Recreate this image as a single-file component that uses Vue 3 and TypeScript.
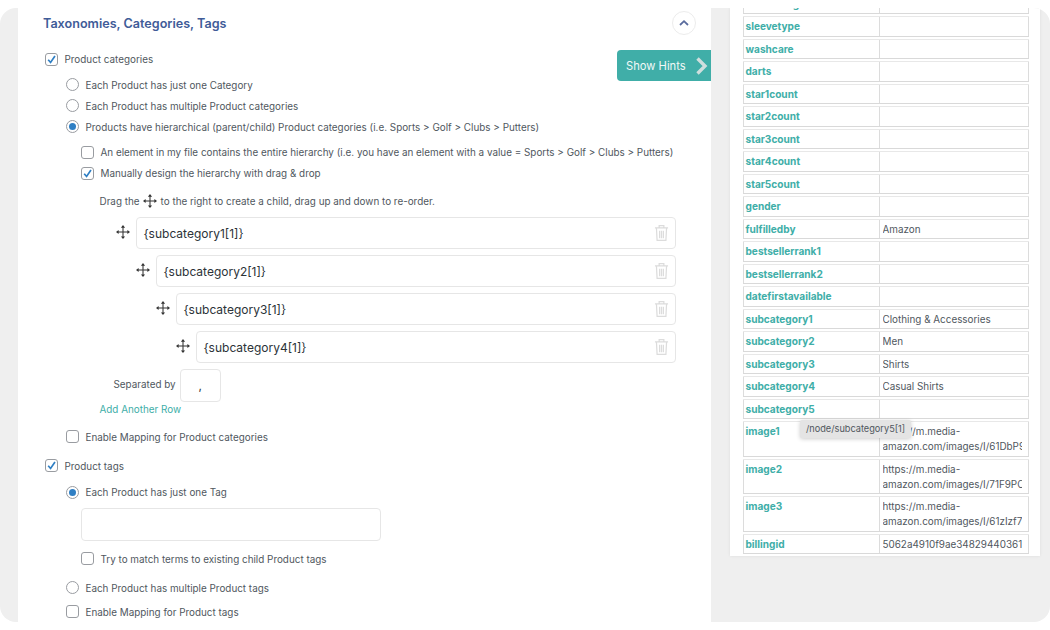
<script setup lang="ts">
interface Row { label: string; value: string; tall?: boolean }
const labels = ['sleevelength','sleevetype','washcare','darts','star1count','star2count','star3count','star4count','star5count','gender']
const rows: Row[] = [
  ...labels.map((label) => ({ label, value: '' })),
  { label: 'fulfilledby', value: 'Amazon' },
  { label: 'bestsellerrank1', value: '' },
  { label: 'bestsellerrank2', value: '' },
  { label: 'datefirstavailable', value: '' },
  { label: 'subcategory1', value: 'Clothing & Accessories' },
  { label: 'subcategory2', value: 'Men' },
  { label: 'subcategory3', value: 'Shirts' },
  { label: 'subcategory4', value: 'Casual Shirts' },
  { label: 'subcategory5', value: '' },
  { label: 'image1', value: 'https://m.media-amazon.com/images/I/61DbP9xkQ2L._AC_UL1500_.jpg', tall: true },
  { label: 'image2', value: 'https://m.media-amazon.com/images/I/71F9PCmN3sL._AC_UL1500_.jpg', tall: true },
  { label: 'image3', value: 'https://m.media-amazon.com/images/I/61zIzf7LpaL._AC_UL1500_.jpg', tall: true },
  { label: 'billingid', value: '5062a4910f9ae34829440361c7d2b8fa' },
]
const levels = [1, 2, 3, 4]
</script>

<template>
  <div class="page">
    <div class="frame">
      <section class="left">
        <header class="head">
          <h2>Taxonomies, Categories, Tags</h2>
          <button class="collapse" type="button" aria-label="Collapse">
            <svg width="12" height="8" viewBox="0 0 12 8"><path d="M2 6 L6 2.2 L10 6" fill="none" stroke="#5a6c9e" stroke-width="1.8" /></svg>
          </button>
        </header>

        <div class="hints">
          <span>Show Hints</span>
          <svg width="13" height="18" viewBox="0 0 13 18"><path d="M2.5 1.5 L10 9 L2.5 16.5" fill="none" stroke="#cfdedd" stroke-width="3.4" /></svg>
        </div>

        <label class="line l0 m-first"><span class="cb on"><svg viewBox="0 0 13 13"><path d="M2.6 6.8 L5.4 10 L10.6 2.4" /></svg></span>Product categories</label>
        <label class="line l1 m-10"><span class="rd"></span>Each Product has just one Category</label>
        <label class="line l1 m-5"><span class="rd"></span>Each Product has multiple Product categories</label>
        <label class="line l1 m-5"><span class="rd on"></span>Products have hierarchical (parent/child) Product categories (i.e. Sports &gt; Golf &gt; Clubs &gt; Putters)</label>
        <label class="line l2 m-10"><span class="cb"></span>An element in my file contains the entire hierarchy (i.e. you have an element with a value = Sports &gt; Golf &gt; Clubs &gt; Putters)</label>
        <label class="line l2 m-5"><span class="cb on"><svg viewBox="0 0 13 13"><path d="M2.6 6.8 L5.4 10 L10.6 2.4" /></svg></span>Manually design the hierarchy with drag &amp; drop</label>

        <p class="drag">Drag the
          <svg class="move small" viewBox="0 0 16 16"><path d="M8 2v12M2 8h12" stroke="#333" stroke-width="1.2" /><path d="M8 0 L10.4 3 H5.6Z M8 16 L10.4 13 H5.6Z M0 8 L3 5.6 V10.4Z M16 8 L13 5.6 V10.4Z" fill="#333" /></svg>
          to the right to create a child, drag up and down to re-order.</p>

        <div class="tree">
          <div v-for="n in levels" :key="n" class="node" :class="'lv' + n">
            <svg class="move" viewBox="0 0 16 16"><path d="M8 2v12M2 8h12" stroke="#333" stroke-width="1.2" /><path d="M8 0 L10.4 3 H5.6Z M8 16 L10.4 13 H5.6Z M0 8 L3 5.6 V10.4Z M16 8 L13 5.6 V10.4Z" fill="#333" /></svg>
            <div class="field">
              <span class="field-text">{subcategory{{ n }}[1]}</span>
              <svg class="trash" viewBox="0 0 16 19" fill="none" stroke="#dcdcdc" stroke-width="1.3"><path d="M1 4h14M5.5 4V1.6h5V4M2.6 4l.7 13.4h9.4L13.4 4M6 7v8M8 7v8M10 7v8" /></svg>
            </div>
          </div>
        </div>

        <div class="sep">
          <span>Separated by</span>
          <div class="sep-box">,</div>
        </div>
        <a class="add">Add Another Row</a>

        <label class="line l1 m-map"><span class="cb"></span>Enable Mapping for Product categories</label>
        <label class="line l0 m-tags"><span class="cb on"><svg viewBox="0 0 13 13"><path d="M2.6 6.8 L5.4 10 L10.6 2.4" /></svg></span>Product tags</label>
        <label class="line l1 m-11"><span class="rd on"></span>Each Product has just one Tag</label>
        <div class="tag-input"></div>
        <label class="line l2 m-10"><span class="cb"></span>Try to match terms to existing child Product tags</label>
        <label class="line l1 m-13"><span class="rd"></span>Each Product has multiple Product tags</label>
        <label class="line l1 m-8"><span class="cb"></span>Enable Mapping for Product tags</label>
      </section>

      <aside class="right">
        <div class="table">
          <div v-for="r in rows" :key="r.label" class="tr" :class="{ tall: r.tall }">
            <div class="key">{{ r.label }}</div>
            <div class="val"><div class="val-text">{{ r.value }}</div></div>
          </div>
        </div>
        <div class="tip">/node/subcategory5[1]</div>
      </aside>
    </div>
  </div>
</template>

<style>
html, body { margin: 0; background: #fff; }
</style>

<style scoped>
.page {
  width: 1050px;
  height: 630px;
  padding: 8px 0;
  box-sizing: border-box;
  background: #fff;
  overflow: hidden;
  font-family: Inter, "Liberation Sans", sans-serif;
  font-size: 9.9px;
  color: #50575e;
}
.frame {
  height: 614px;
  display: flex;
  align-items: flex-start;
  padding-left: 18px;
  background: #efefef;
  border-radius: 16px;
  overflow: hidden;
}
.left {
  position: relative;
  width: 693px;
  height: 614px;
  flex: none;
  padding-left: 25px;
  box-sizing: border-box;
  background: #fff;
  overflow: hidden;
}
.head {
  display: flex;
  align-items: center;
  justify-content: space-between;
  height: 30px;
  padding-right: 15px;
}
h2 {
  margin: 0;
  font-size: 12.6px;
  font-weight: 600;
  color: #3f5c98;
}
.collapse {
  width: 24px;
  height: 24px;
  padding: 0;
  display: flex;
  align-items: center;
  justify-content: center;
  border: 1px solid #ececec;
  border-radius: 50%;
  background: #fff;
}
.hints {
  position: absolute;
  top: 42px;
  right: 0;
  width: 94px;
  height: 31px;
  box-sizing: border-box;
  padding: 0 3px 0 9px;
  display: flex;
  align-items: center;
  justify-content: space-between;
  background: #40aea8;
  border-radius: 4px 0 0 4px;
  color: #f1f8f7;
  font-size: 11.2px;
}
.line {
  display: flex;
  align-items: center;
  height: 16px;
  white-space: nowrap;
}
.l0 { margin-left: 2px; }
.l1 { margin-left: 23px; }
.l2 { margin-left: 38px; }
.m-first { margin-top: 13px; }
.m-5 { margin-top: 5px; }
.m-8 { margin-top: 8px; }
.m-10 { margin-top: 9.5px; }
.m-11 { margin-top: 10.5px; }
.m-13 { margin-top: 13px; }
.m-map { margin-top: 12px; }
.m-tags { margin-top: 13px; }
.cb, .rd {
  flex: none;
  width: 13px;
  height: 13px;
  margin-right: 6.5px;
  box-sizing: border-box;
  border: 1px solid #999ca1;
  background: #fff;
}
.cb { border-radius: 3px; }
.cb svg { display: block; width: 11px; height: 11px; fill: none; stroke: #2f7fc4; stroke-width: 2; }
.rd { border-radius: 50%; display: flex; align-items: center; justify-content: center; }
.rd.on::after { content: ""; width: 7px; height: 7px; border-radius: 50%; background: #2f7fc4; }
.drag {
  margin: 11.5px 0 0 56.5px;
  height: 16px;
  display: flex;
  align-items: center;
  gap: 3.5px;
  white-space: nowrap;
}
.move { width: 14px; height: 14px; flex: none; }
.tree { margin-top: 8px; display: flex; flex-direction: column; gap: 6px; }
.node { display: flex; align-items: center; height: 32px; padding-right: 35px; }
.lv1 { padding-left: 73px; }
.lv2 { padding-left: 93px; }
.lv3 { padding-left: 113px; }
.lv4 { padding-left: 133px; }
.node .move { margin-top: -2px; margin-right: 6px; }
.field {
  flex: 1;
  height: 32px;
  box-sizing: border-box;
  display: flex;
  align-items: center;
  justify-content: space-between;
  padding: 0 6px 0 6.5px;
  border: 1px solid #e6e6e6;
  border-radius: 4px;
  color: #2c3338;
  font-size: 12px;
}
.field-text { margin-top: 2px; }
.trash { width: 15px; height: 18px; }
.sep {
  margin: 6px 0 0 70.5px;
  display: flex;
  align-items: center;
  gap: 4px;
}
.sep span { margin-top: -3px; }
.sep-box {
  width: 41px;
  height: 33px;
  box-sizing: border-box;
  border: 1px solid #e6e6e6;
  border-radius: 4px;
  display: flex;
  justify-content: center;
  align-items: center;
  color: #2c3338;
  font-size: 12px;
}
.add {
  display: block;
  margin: 0 0 0 56.5px;
  height: 15px;
  line-height: 15px;
  color: #40aea8;
}
.tag-input {
  width: 300px;
  height: 33px;
  box-sizing: border-box;
  margin: 8px 0 0 38px;
  border: 1px solid #e6e6e6;
  border-radius: 4px;
}
.right {
  position: relative;
  width: 310px;
  height: 548px;
  flex: none;
  margin-left: 19px;
  padding: 0 11px 0 12.5px;
  box-sizing: border-box;
  background: #fff;
  box-shadow: 0 0 3px rgba(0, 0, 0, 0.08);
  overflow: hidden;
}
.table { display: flex; flex-direction: column; gap: 2px; margin-top: -14.5px; }
.tr {
  display: flex;
  flex: none;
  height: 20.5px;
  box-sizing: border-box;
  border-bottom: 1px solid #d9d9d9;
  border-top: 1px solid #e8e8e8;
}
.tr.tall { height: 35.5px; }
.key {
  width: 137.5px;
  flex: none;
  box-sizing: border-box;
  padding: 2px 0 0 2px;
  line-height: 15px;
  border-left: 1px solid #dcdcdc;
  border-right: 1px solid #dcdcdc;
  font-weight: 700;
  font-size: 10.1px;
  color: #40aea8;
}
.val {
  flex: 1;
  min-width: 0;
  box-sizing: border-box;
  padding: 2px 6px 0 2.5px;
  border-right: 1px solid #dcdcdc;
}
.val-text { overflow: hidden; line-height: 15px; max-height: 30px; font-size: 9.9px; }
.tip {
  position: absolute;
  left: 70px;
  top: 412px;
  height: 18px;
  line-height: 18px;
  padding: 0 6px;
  border-radius: 2px;
  background: #e4e4e4;
  box-shadow: 0 1px 4px rgba(0, 0, 0, 0.2);
  font-size: 9.2px;
  white-space: nowrap;
}
</style>
